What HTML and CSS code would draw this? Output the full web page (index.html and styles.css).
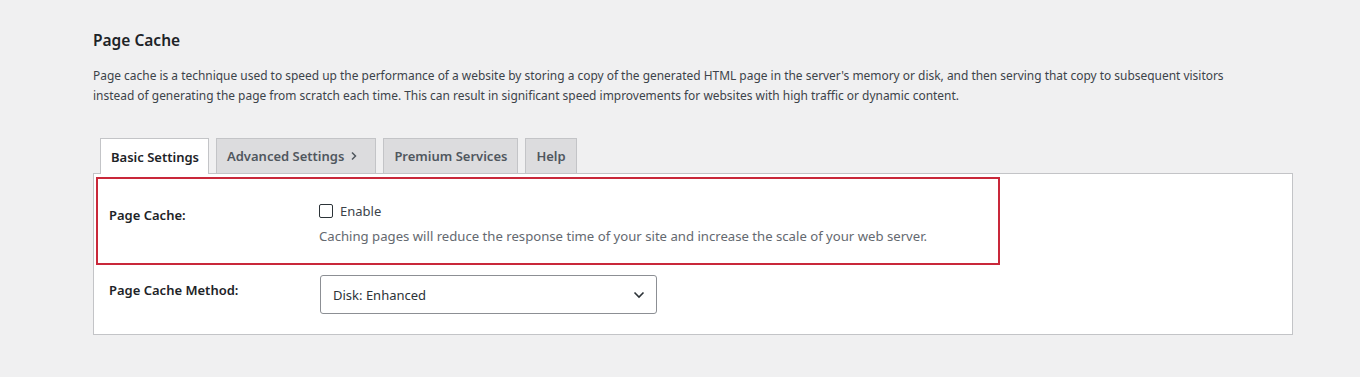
FILE: index.html
```html
<!DOCTYPE html>
<html>
<head>
<meta charset="utf-8">
<link rel="stylesheet" href="styles.css">
</head>
<body>
<div class="wrap">
  <h2 class="title">Page Cache</h2>
  <p class="intro">Page cache is a technique used to speed up the performance of a website by storing a copy of the generated HTML page in the server's memory or disk, and then serving that copy to subsequent visitors<br>instead of generating the page from scratch each time. This can result in significant speed improvements for websites with high traffic or dynamic content.</p>
  <div class="tabs">
    <div class="tab active">Basic Settings</div>
    <div class="tab tab-adv">Advanced Settings <svg class="chev-r" width="8" height="10" viewBox="0 0 8 10"><path d="M2 1.5 L5.5 5 L2 8.5" fill="none" stroke="#50575e" stroke-width="1.5"/></svg></div>
    <div class="tab">Premium Services</div>
    <div class="tab">Help</div>
  </div>
  <div class="panel">
    <div class="highlight">
      <div class="row">
        <div class="label label-1">Page Cache:</div>
        <div class="field">
          <div class="check-line"><span class="checkbox"></span><span class="enable">Enable</span></div>
          <div class="desc">Caching pages will reduce the response time of your site and increase the scale of your web server.</div>
        </div>
      </div>
    </div>
    <div class="row row-2">
      <div class="label label-2">Page Cache Method:</div>
      <div class="select">
        <span>Disk: Enhanced</span>
        <svg width="12" height="8" viewBox="0 0 12 8"><path d="M1.5 1.5 L6 6 L10.5 1.5" fill="none" stroke="#2c3338" stroke-width="1.6"/></svg>
      </div>
    </div>
  </div>
</div>
</body>
</html>
```
FILE: styles.css
```css
html, body {
  margin: 0;
  padding: 0;
  background: #f0f0f1;
  font-family: "Noto Sans", "Open Sans", sans-serif;
  color: #3c434a;
}
.wrap {
  margin-left: 93px;
  width: 1200px;
  padding-top: 28px;
}
.title {
  margin: 0;
  font-size: 15.5px;
  font-weight: 600;
  line-height: 24px;
  color: #1d2327;
}
.intro {
  margin: 14px 0 0;
  font-size: 11.95px;
  line-height: 20px;
  color: #3c434a;
}
.tabs {
  display: flex;
  gap: 7px;
  margin-top: 32px;
  padding-left: 7px;
  height: 35px;
  position: relative;
  z-index: 1;
}
.tab {
  box-sizing: border-box;
  height: 35px;
  padding: 0 10px;
  display: flex;
  align-items: center;
  gap: 5px;
  background: #dcdcde;
  border: 1px solid #c3c4c7;
  border-bottom: none;
  font-size: 13px;
  font-weight: 600;
  color: #50575e;
}
.tab-adv {
  gap: 6px;
  padding-right: 17px;
}
.tab.active {
  background: #fff;
  color: #1d2327;
  height: 36px;
  padding-right: 9px;
}
.panel {
  box-sizing: border-box;
  width: 1200px;
  background: #fff;
  border: 1px solid #c3c4c7;
  padding: 3px 2px 20px;
}
.highlight {
  box-sizing: border-box;
  width: 904px;
  height: 88px;
  border: 2px solid #c9283a;
  padding-left: 11px;
}
.row {
  display: flex;
}
.label {
  box-sizing: border-box;
  width: 210px;
  font-size: 13px;
  font-weight: 600;
  line-height: 20px;
  color: #1d2327;
}
.label-1 {
  padding-top: 26px;
}
.field {
  padding-top: 22px;
}
.check-line {
  display: flex;
  align-items: center;
  height: 20px;
}
.checkbox {
  box-sizing: border-box;
  width: 14px;
  height: 14px;
  border: 1px solid #2c3338;
  border-radius: 2px;
  margin-right: 7px;
}
.enable {
  font-size: 13px;
  color: #3c434a;
}
.desc {
  margin-top: 5px;
  font-size: 13.15px;
  line-height: 20px;
  color: #646970;
}
.row-2 {
  margin-top: 10px;
  padding-left: 13px;
}
.label-2 {
  width: 211px;
  padding-top: 5px;
}
.select {
  box-sizing: border-box;
  width: 337px;
  height: 39px;
  border: 1px solid #8c8f94;
  border-radius: 3px;
  display: flex;
  align-items: center;
  justify-content: space-between;
  padding: 0 11px 0 12px;
  font-size: 13px;
  color: #2c3338;
}
```
